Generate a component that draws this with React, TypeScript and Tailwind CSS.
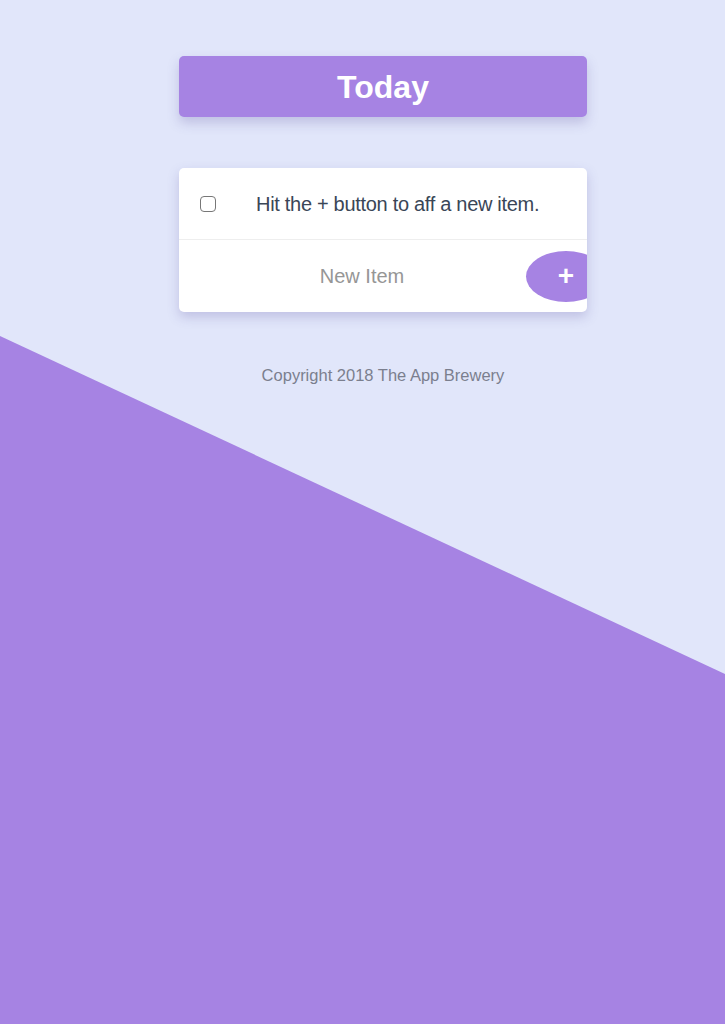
import React from "react";

export default function App() {
  return (
    <div className="relative min-h-[1024px] w-full overflow-hidden bg-[#e1e6fa]" style={{ fontFamily: '"Liberation Sans", Arial, sans-serif' }}>
      <div className="absolute inset-0 bg-[#a683e3] [clip-path:polygon(0_336px,100%_674px,100%_100%,0_100%)]" />
      <div className="relative flex w-[408px] flex-col items-center pt-[56px] ml-[179px]">
        <div className="flex h-[61px] w-[408px] items-center justify-center rounded-[5px] bg-[#a683e3] shadow-[0_6px_12px_rgba(90,80,160,0.25)]">
          <h1 className="text-[32px] font-bold text-white">Today</h1>
        </div>
        <div className="mt-[51px] w-[408px] overflow-hidden rounded-[5px] bg-white shadow-[0_5px_12px_rgba(90,80,160,0.25)]">
          <div className="flex h-[72px] items-center border-b border-[#eeeeee]">
            <div className="ml-[21px] h-[16px] w-[16px] rounded-[4px] border-[1.5px] border-[#777777] bg-white" />
            <p className="ml-[40px] text-[20px] tracking-[-0.3px] text-[#3a4657]">Hit the + button to aff a new item.</p>
          </div>
          <div className="relative flex h-[72px] items-center">
            <input className="h-full w-[366px] bg-transparent text-center text-[20px] text-[#888888] outline-none placeholder:text-[#969696]" placeholder="New Item" />
            <button className="absolute left-[347px] top-[11px] flex h-[51px] w-[80px] items-center justify-center rounded-[50%] bg-[#a683e3] text-[28px] font-bold leading-none text-white">
              <span className="-mt-[2px]">+</span>
            </button>
          </div>
        </div>
        <p className="mt-[51px] text-[16.5px] text-[#7b7f8e]">Copyright 2018 The App Brewery</p>
      </div>
    </div>
  );
}
